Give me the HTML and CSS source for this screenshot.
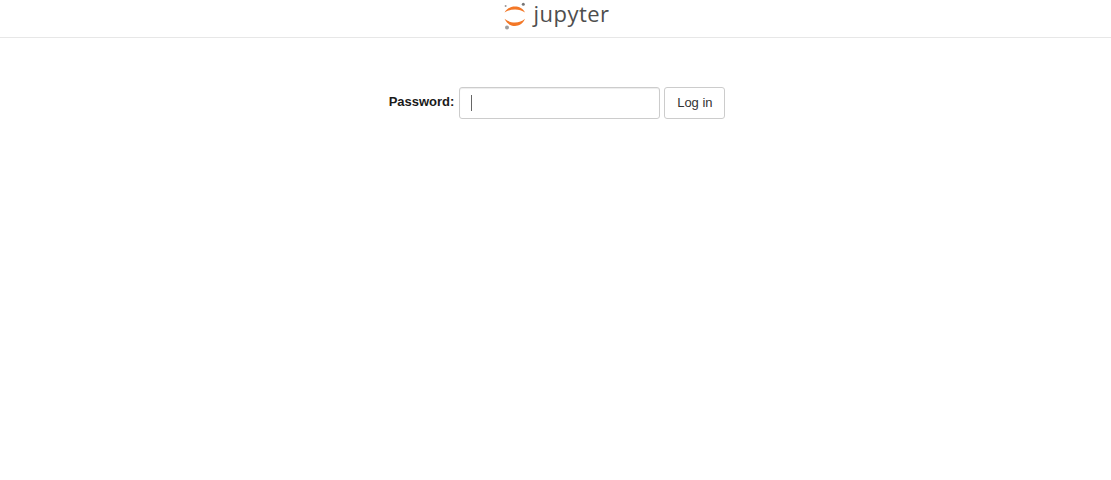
FILE: index.html
```html
<!DOCTYPE html>
<html lang="en">
<head>
  <meta charset="UTF-8">
  <meta name="viewport" content="width=device-width, initial-scale=1.0">
  <title>Jupyter Server</title>
  <link rel="stylesheet" href="styles.css">
</head>
<body>
  <header class="header">
    <a class="logo" href="#">
      <svg class="logo-mark" width="24" height="30" viewBox="0 0 24 30">
        <path d="M1.500 11.500C4 7.300 8 5.600 12 5.600S20 7.300 22 11.500C19 9.400 16 8.400 12 8.400S4.500 9.400 1.500 11.500Z" fill="#f37726"/>
        <path d="M1.500 17.800C4 22.800 8 25 12 25S20 22.800 22 17.800C19 20.300 16 21.600 12 21.600S4.500 20.300 1.500 17.800Z" fill="#f37726"/>
        <circle cx="20.300" cy="3.300" r="1.500" fill="#767677"/>
        <circle cx="2.600" cy="5" r="1" fill="#989798"/>
        <circle cx="4" cy="26.500" r="2" fill="#9e9e9e"/>
      </svg>
      <span class="logo-text">jupyter</span>
    </a>
  </header>

  <main class="login">
    <form class="login-form" onsubmit="return false">
      <label class="login-label" for="password">Password:</label>
      <div class="login-field">
        <input class="login-input" id="password" type="password">
        <span class="login-caret"></span>
      </div>
      <button class="login-btn" type="submit">Log in</button>
    </form>
  </main>
</body>
</html>
```

FILE: styles.css
```css
body {
  margin: 0;
  background: #fff;
  font-family: "Liberation Sans", Arial, sans-serif;
  font-size: 13px;
  color: #000;
}

.header {
  display: flex;
  justify-content: center;
  height: 37px;
  border-bottom: 1px solid #e7e7e7;
}

.logo {
  display: flex;
  align-items: flex-start;
  gap: 6px;
  margin-left: 2px;
  text-decoration: none;
}

.logo-mark {
  margin-top: 1px;
}

.logo-text {
  font-family: "Open Sans", sans-serif;
  font-size: 22px;
  font-weight: 500;
  line-height: 26px;
  letter-spacing: 0.5px;
  color: #4e4e4e;
}

.login {
  padding-top: 49px;
}

.login-form {
  display: flex;
  justify-content: center;
  align-items: center;
  gap: 4px;
  margin-left: 3px;
}

.login-label {
  font-weight: 700;
  color: #1a1a1a;
  margin-right: 1px;
  margin-bottom: 3px;
}

.login-field {
  position: relative;
  display: flex;
}

.login-input {
  box-sizing: border-box;
  width: 201px;
  height: 32px;
  padding: 6px 12px;
  border: 1px solid #ccc;
  border-radius: 3px;
  box-shadow: inset 0 1px 1px rgba(0, 0, 0, 0.075);
  font-size: 13px;
  outline: none;
}

.login-caret {
  position: absolute;
  left: 12px;
  top: 8px;
  width: 1px;
  height: 16px;
  background: #666;
}

.login-btn {
  box-sizing: border-box;
  width: 61px;
  height: 32px;
  padding: 5px 0 7px;
  background: #fff;
  border: 1px solid #ccc;
  border-radius: 3px;
  font-family: inherit;
  font-size: 13px;
  color: #333;
  white-space: nowrap;
}
```
